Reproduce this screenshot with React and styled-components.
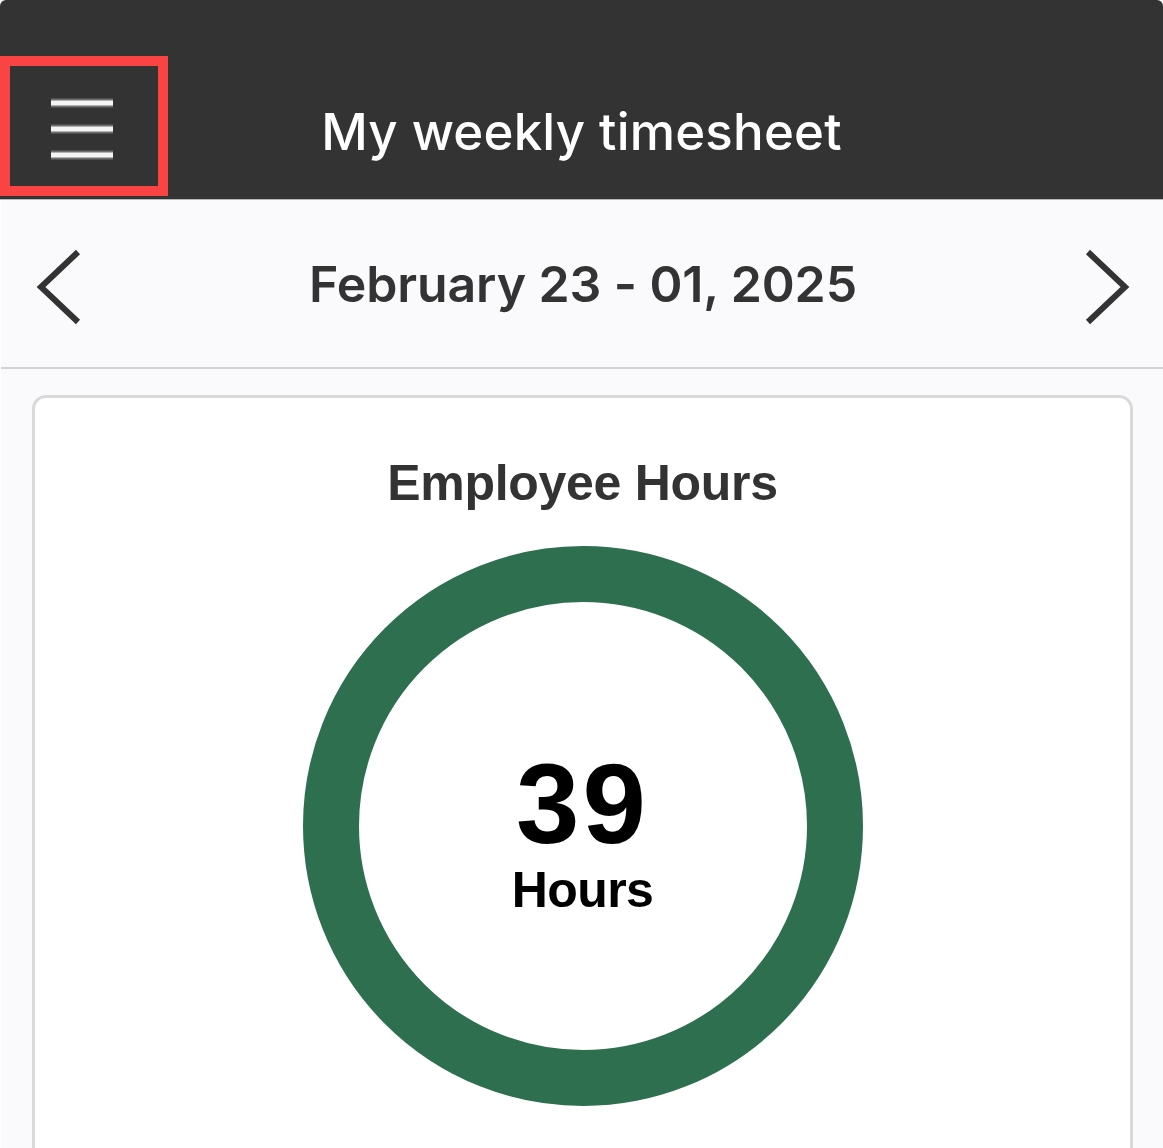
import React from "react"
import styled, { createGlobalStyle } from "styled-components"

const GlobalStyle = createGlobalStyle`
  html, body {
    margin: 0;
    padding: 0;
    background: #ffffff;
  }
  * {
    box-sizing: border-box;
  }
`;

const colors = {
  header: '#333333',
  canvas: '#fafafc',
  rule: '#d3d3d3',
  ink: '#333333',
  green: '#2d6f4f',
  alert: '#fa4343',
};

const Page = styled.div`
  padding-left: 1px;
  min-height: 1148px;
  overflow: hidden;
`;

const Screen = styled.div`
  background: ${colors.canvas};
  min-height: 1148px;
`;

const HeaderBar = styled.header`
  display: grid;
  grid-template-columns: 167px 1fr 167px;
  align-items: start;
  height: 200px;
  padding-top: 56px;
  margin-left: -1px;
  background: ${colors.header};
  border-radius: 6px 6px 0 0;
  border-bottom: 1px solid #b8b8b8;
`;

const MenuButton = styled.button`
  display: flex;
  align-items: center;
  justify-content: center;
  width: 168px;
  height: 140px;
  padding: 6px 4px 0 0;
  margin: 0;
  background: transparent;
  border: 10px solid ${colors.alert};
  cursor: pointer;
`;

const Title = styled.h1`
  margin: 50px 0 0;
  font-family: Inter, "Liberation Sans", sans-serif;
  font-size: 51px;
  font-weight: 500;
  line-height: 1;
  letter-spacing: 0.2px;
  color: #ffffff;
  text-align: center;
`;

const WeekBar = styled.nav`
  display: flex;
  align-items: center;
  justify-content: space-between;
  height: 169px;
  padding: 0 33px 0 35px;
  border-bottom: 2px solid ${colors.rule};
`;

const ArrowButton = styled.button`
  display: flex;
  padding: 0;
  margin: 6px 0 0;
  background: none;
  border: none;
  cursor: pointer;
`;

const WeekLabel = styled.h2`
  margin: 0;
  font-family: Inter, "Liberation Sans", sans-serif;
  font-size: 50px;
  font-weight: 600;
  line-height: 1;
  letter-spacing: -0.1px;
  color: ${colors.ink};
`;

const Content = styled.main`
  padding: 26px 30px 0 31px;
`;

const Card = styled.section`
  display: flex;
  flex-direction: column;
  align-items: center;
  padding: 60px 0 120px;
  background: #ffffff;
  border: 3px solid #d9d9d9;
  border-radius: 14px;
`;

const CardTitle = styled.h3`
  margin: 0 0 38px;
  font-family: "Liberation Sans", Arial, sans-serif;
  font-size: 50px;
  font-weight: 700;
  line-height: 1;
  letter-spacing: -0.3px;
  color: ${colors.ink};
`;

const Ring = styled.div`
  display: flex;
  flex-direction: column;
  align-items: center;
  justify-content: center;
  gap: 4px;
  width: 560px;
  height: 560px;
  padding-top: 10px;
  border: 56px solid ${colors.green};
  border-radius: 50%;
`;

const Total = styled.span`
  font-family: "Liberation Sans", Arial, sans-serif;
  font-size: ${p => p.$size}px;
  font-weight: 700;
  line-height: 1;
  letter-spacing: ${p => p.$track}px;
  color: #000000;
`;

const MenuIcon = () => (
  <svg width="62" height="62" viewBox="0 0 62 62">
    {[5, 31, 57].map(y => (
      <g key={y}>
        <line x1="0" y1={y} x2="62" y2={y} stroke="#6e6e6e" strokeWidth="9" />
        <line x1="0" y1={y} x2="62" y2={y} stroke="#f4f4f4" strokeWidth="5" />
      </g>
    ))}
  </svg>
);

const Chevron = ({ dir }) => (
  <svg width="46" height="76" viewBox="0 0 46 76">
    <polyline
      points={dir === 'left' ? '42,3 5,38 42,73' : '4,3 41,38 4,73'}
      fill="none"
      stroke={colors.ink}
      strokeWidth="6"
    />
  </svg>
);

const App = () => (
  <Page>
    <GlobalStyle />
    <Screen>
      <HeaderBar>
        <MenuButton aria-label="Menu">
          <MenuIcon />
        </MenuButton>
        <Title>My weekly timesheet</Title>
      </HeaderBar>
      <WeekBar>
        <ArrowButton aria-label="Previous week">
          <Chevron dir="left" />
        </ArrowButton>
        <WeekLabel>February 23 - 01, 2025</WeekLabel>
        <ArrowButton aria-label="Next week">
          <Chevron dir="right" />
        </ArrowButton>
      </WeekBar>
      <Content>
        <Card>
          <CardTitle>Employee Hours</CardTitle>
          <Ring>
            <Total $size={114} $track={3}>39</Total>
            <Total $size={50} $track={-0.6}>Hours</Total>
          </Ring>
        </Card>
      </Content>
    </Screen>
  </Page>
)

export default App
